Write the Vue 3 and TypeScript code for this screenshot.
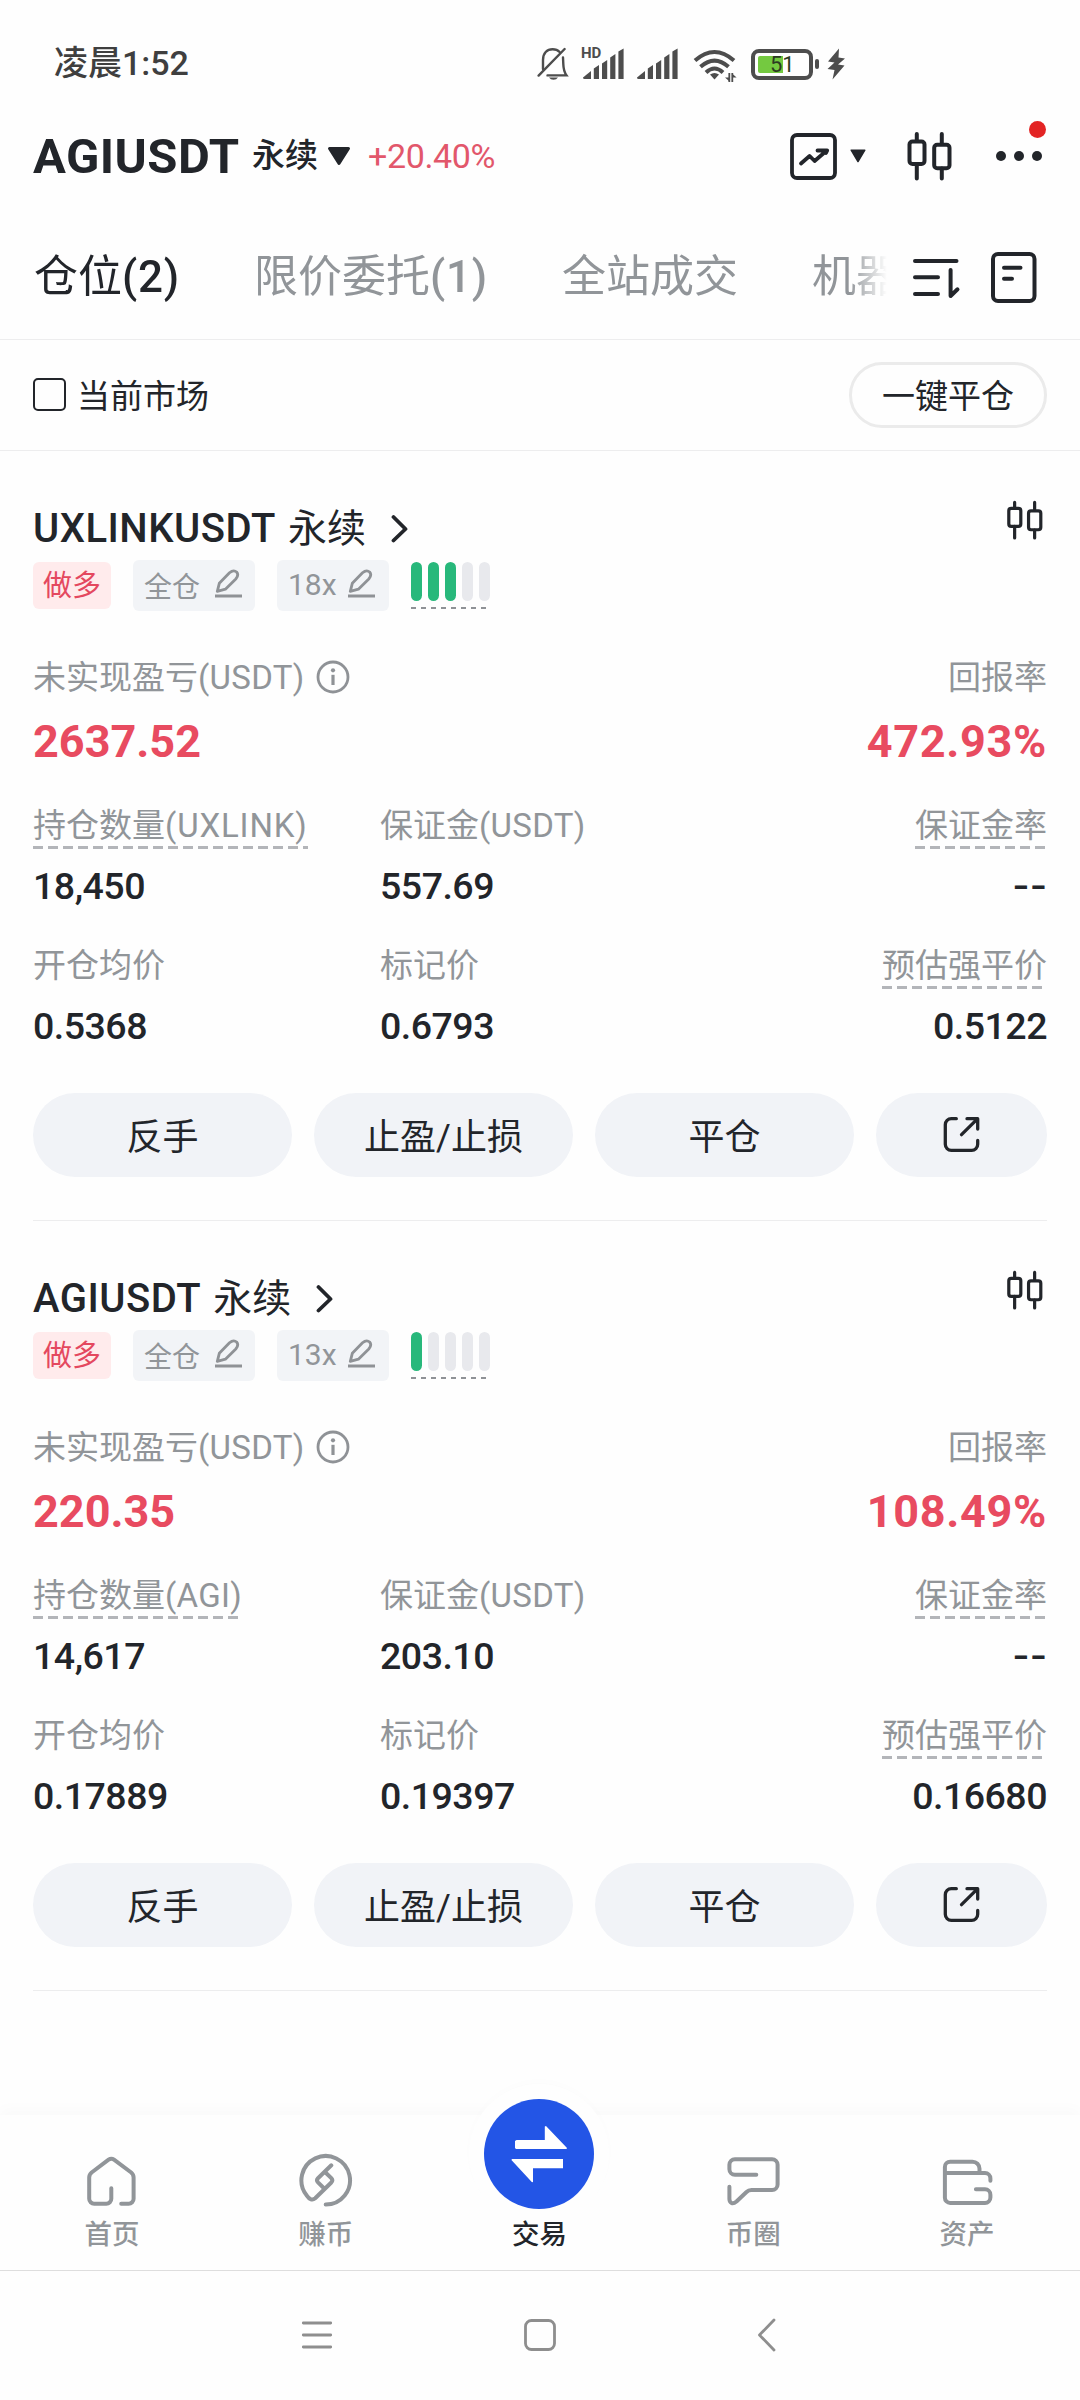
<script setup lang="ts">
interface Cell {
  label: string
  unit?: string
  value: string
  hint?: boolean
}

interface Position {
  symbol: string
  leverage: string
  risk: number
  pnl: string
  roi: string
  cells: Cell[]
}

const tabs = [
  { name: '仓位', count: '(2)', active: true },
  { name: '限价委托', count: '(1)', active: false },
  { name: '全站成交', count: '', active: false },
  { name: '机器人', count: '', active: false },
]

const positions: Position[] = [
  {
    symbol: 'UXLINKUSDT',
    leverage: '18x',
    risk: 3,
    pnl: '2637.52',
    roi: '472.93%',
    cells: [
      { label: '持仓数量', unit: '(UXLINK)', value: '18,450', hint: true },
      { label: '保证金', unit: '(USDT)', value: '557.69' },
      { label: '保证金率', value: '--', hint: true },
      { label: '开仓均价', value: '0.5368' },
      { label: '标记价', value: '0.6793' },
      { label: '预估强平价', value: '0.5122', hint: true },
    ],
  },
  {
    symbol: 'AGIUSDT',
    leverage: '13x',
    risk: 1,
    pnl: '220.35',
    roi: '108.49%',
    cells: [
      { label: '持仓数量', unit: '(AGI)', value: '14,617', hint: true },
      { label: '保证金', unit: '(USDT)', value: '203.10' },
      { label: '保证金率', value: '--', hint: true },
      { label: '开仓均价', value: '0.17889' },
      { label: '标记价', value: '0.19397' },
      { label: '预估强平价', value: '0.16680', hint: true },
    ],
  },
]

const actions = ['反手', '止盈/止损', '平仓']
</script>

<template>
  <div class="screen">
    <div class="status">
      <span class="clock">凌晨1:52</span>
      <svg class="s-bell" width="32" height="34" viewBox="0 0 32 34" fill="none" stroke="#4d4d4d" stroke-width="2.4" stroke-linecap="round">
        <path d="M6 22V13C6 6 10 2.3 15.6 2.3Q20 2.3 22.6 5M26 10.5L26.3 17Q26.5 24 29.5 28.4H10.5" />
        <path d="M1.6 28.6L27.6 2" />
        <path d="M12 30.5h9q-1.5 2.3-4.5 2.3t-4.500-2.300z" fill="#4d4d4d" stroke="none" />
      </svg>
      <div class="sim">
        <span class="hd">HD</span>
        <svg width="41" height="32" viewBox="0 0 41 32" fill="#4d4d4d">
          <path d="M0 29.500L8 23V31H1.500Q0 31 0 29.500z" />
          <path d="M10.800 20.500L16 17V31H10.800zM19 15.500L24.200 12V31H19zM27.200 9.500L32.400 6V31H27.200zM35.400 3.500L40.600 0.500V31H35.400z" />
        </svg>
      </div>
      <svg class="s-sim2" width="41" height="32" viewBox="0 0 41 32" fill="#4d4d4d">
        <path d="M0 29.500L8 23V31H1.500Q0 31 0 29.500z" />
        <path d="M10.800 20.500L16 17V31H10.800zM19 15.500L24.200 12V31H19zM27.200 9.500L32.400 6V31H27.200zM35.400 3.500L40.600 0.500V31H35.400z" />
      </svg>
      <svg class="s-wifi" width="44" height="34" viewBox="0 0 44 34" fill="none" stroke="#4d4d4d" stroke-width="4">
        <path d="M2 11.500Q21.500-5.500 41 11.500" />
        <path d="M7.500 17.800Q21.500 5.500 35.500 17.800" />
        <path d="M13 23.500Q21.500 15.500 30 23.500" />
        <path d="M17 25.500Q21.500 22.500 26 25.500L21.500 30.500z" fill="#4d4d4d" stroke="none" />
        <path d="M36.300 24V33M39.300 24V33" stroke-width="1.800" />
        <path d="M32 28.500h4v3.500zM43.600 28.500h-4v-3.500z" fill="#4d4d4d" stroke="none" />
      </svg>
      <div class="battery"><i></i><b>51</b></div>
      <div class="battery-cap"></div>
      <svg class="s-bolt" width="19" height="32" viewBox="0 0 19 32" fill="#4d4d4d">
        <path d="M12 0.500L1 13.500L7.500 14.500L0.500 21L7.500 22L5.500 31.500L17.500 17.500L11 16.500L18 10.500L11.500 9.500z" />
      </svg>
    </div>

    <header class="header">
      <h1>AGIUSDT</h1>
      <span class="perp">永续</span>
      <svg class="tri" width="24" height="20" viewBox="0 0 24 20"><path d="M2.500 2.500H21.500L12 17.500z" fill="#22252a" stroke="#22252a" stroke-width="3" stroke-linejoin="round" /></svg>
      <span class="change">+20.40%</span>
      <span class="grow"></span>
      <svg class="h-chart" width="49" height="49" viewBox="0 0 49 49" fill="none" stroke="#22252a" stroke-width="3.800" stroke-linecap="round" stroke-linejoin="round">
        <rect x="3" y="3" width="43" height="43" rx="5" />
        <path d="M12 31.500L20.600 24L25.600 29L37.500 18.800M28.500 18.500H38.200L37 21" />
      </svg>
      <svg class="h-tri" width="16" height="14" viewBox="0 0 16 14"><path d="M1.200 1.200H14.800L8 12.500z" fill="#22252a" stroke="#22252a" stroke-width="1.500" stroke-linejoin="round" /></svg>
      <svg class="h-candles" width="48" height="51" viewBox="0 0 48 51" fill="none" stroke="#22252a" stroke-width="4" stroke-linecap="round">
        <path d="M10.800 3V10M10.800 33V47.500M35.800 3V13M35.800 37.500V47.500" />
        <rect x="3.500" y="10.500" width="15" height="22.500" rx="3" />
        <rect x="28.200" y="13.700" width="15.300" height="23.500" rx="3" />
      </svg>
      <div class="more">
        <i></i><i></i><i></i>
        <em></em>
      </div>
    </header>

    <nav class="tabs">
      <div class="tab-list">
        <span v-for="t in tabs" :key="t.name" class="tab" :class="{ active: t.active }">{{ t.name }}<b>{{ t.count }}</b></span>
      </div>
      <svg class="t-sort" width="50" height="44" viewBox="0 0 50 44" fill="none" stroke="#22252a" stroke-width="4" stroke-linecap="round" stroke-linejoin="round">
        <path d="M4 5H45.500M4 21.300H27M4 38H27M39.600 14V40L46.500 33.300" />
      </svg>
      <svg class="t-note" width="50" height="55" viewBox="0 0 50 55" fill="none" stroke="#22252a" stroke-width="4" stroke-linecap="round">
        <rect x="4" y="4" width="41.500" height="47" rx="5" />
        <path d="M15 17.700H31.500M15 28.700H23" />
      </svg>
    </nav>

    <div class="filter">
      <span class="check"></span>
      <span class="check-label">当前市场</span>
      <button class="close-all">一键平仓</button>
    </div>

    <section v-for="p in positions" :key="p.symbol" class="card">
      <div class="title">
        <span class="symbol">{{ p.symbol }}</span>
        <span class="kind">永续</span>
        <svg class="chev" width="18" height="30" viewBox="0 0 18 30" fill="none" stroke="#22252a" stroke-width="3.800" stroke-linecap="round" stroke-linejoin="round"><path d="M2.500 3L14.500 15L2.500 26.500" /></svg>
        <svg class="c-candles" width="38.400" height="40.800" viewBox="0 0 48 51" fill="none" stroke="#22252a" stroke-width="4" stroke-linecap="round">
          <path d="M10.800 3V10M10.800 33V47.500M35.800 3V13M35.800 37.500V47.500" />
          <rect x="3.500" y="10.500" width="15" height="22.500" rx="3" />
          <rect x="28.200" y="13.700" width="15.300" height="23.500" rx="3" />
        </svg>
      </div>

      <div class="tags">
        <span class="side">做多</span>
        <span class="tag mode">全仓<svg class="pencil" width="30" height="31" viewBox="0 0 30 31" fill="none" stroke="#8f9296" stroke-width="2.800" stroke-linejoin="round"><path d="M4.300 23.300L6.300 15.300L16.500 4.800Q20.500 1.400 23.600 4Q26.200 7 22.800 11L12.400 21.200zM2 28H29" /></svg></span>
        <span class="tag lev">{{ p.leverage }}<svg class="pencil" width="30" height="31" viewBox="0 0 30 31" fill="none" stroke="#8f9296" stroke-width="2.800" stroke-linejoin="round"><path d="M4.300 23.300L6.300 15.300L16.500 4.800Q20.500 1.400 23.600 4Q26.200 7 22.800 11L12.400 21.200zM2 28H29" /></svg></span>
        <div class="risk">
          <div class="bars"><i v-for="n in 5" :key="n" :class="{ on: n <= p.risk }"></i></div>
        </div>
      </div>

      <div class="row pnl-label">
        <span class="label">未实现盈亏<span class="unit">(USDT)</span></span>
        <svg class="info" width="34" height="34" viewBox="0 0 34 34" fill="none" stroke="#8f9296" stroke-width="2.800"><circle cx="17" cy="17" r="15" /><path d="M17 14.800V25" stroke-width="3.200" /><circle cx="17" cy="10.300" r="2.100" fill="#8f9296" stroke="none" /></svg>
        <span class="label end">回报率</span>
      </div>
      <div class="row pnl">
        <span>{{ p.pnl }}</span>
        <span class="end roi">{{ p.roi }}</span>
      </div>

      <div class="cells">
        <div v-for="c in p.cells" :key="c.label" class="cell">
          <span class="label" :class="{ hint: c.hint }">{{ c.label }}<span v-if="c.unit" class="unit" :class="{ wide: c.unit.length > 6 }">{{ c.unit }}</span></span>
          <span class="value" :class="{ none: c.value === '--' }">{{ c.value }}</span>
        </div>
      </div>

      <div class="actions">
        <button v-for="a in actions" :key="a">{{ a }}</button>
        <button class="share">
          <svg width="41" height="41" viewBox="0 0 41 41" fill="none" stroke="#22252a" stroke-width="3.300" stroke-linecap="round" stroke-linejoin="round">
            <path d="M15.300 4.700H10.300a6 6 0 0 0-6 6V30.300a6 6 0 0 0 6 6H30.700a6 6 0 0 0 6-6V26.500" />
            <path d="M20.500 20.700L36.200 5.200M26 4.700H36.700V15" />
          </svg>
        </button>
      </div>
    </section>

    <div class="grow"></div>

    <footer class="nav">
      <div class="hump"></div>
      <div class="item">
        <svg width="51" height="54" viewBox="1 0 51 54"><path d="M26.300 33.300V43.700a5 5 0 0 1-5 5H9.200a5 5 0 0 1-5-5V22.500q0-3 2.400-5L23.600 4.700q2.700-2 5.400 0L46.200 17.500q2.400 2 2.400 5V43.700a5 5 0 0 1-5 5H36.200" /></svg>
        <span>首页</span>
      </div>
      <div class="item">
        <svg width="57" height="58" viewBox="0 0 57 58"><path d="M28.700 53.600A24.300 24.300 0 1 0 9.600 44.300Q14 50.800 18.200 47.300L34.300 31.500q2-2.200 0-4.400L28.500 21.500M34.300 14.300L21 27.200q-2 2.100 0 4.200L27.700 38" /></svg>
        <span>赚币</span>
      </div>
      <div class="item on">
        <div class="trade">
          <svg width="110" height="110" viewBox="0 0 110 110"><path d="M32.500 41H60.800V27.500L62 27L83 49L82.500 50H32L31 49V42zM28 60H79V69.300H49V83L48 83.200L27.400 61z" /></svg>
        </div>
        <span>交易</span>
      </div>
      <div class="item">
        <svg width="55" height="54" viewBox="0 0 55 54"><path d="M30.300 19.700H8.900a5.500 5.500 0 0 1-5.500-5.500V9.800a5.500 5.500 0 0 1 5.500-5.500H46.100a5.500 5.500 0 0 1 5.500 5.500V29.500a5.500 5.500 0 0 1-5.500 5.500H25.500q-3 0-5 2L10.500 46.500Q7.500 49 5.500 48T3.400 44V31.700" /></svg>
        <span>币圈</span>
      </div>
      <div class="item">
        <svg width="53" height="52" viewBox="0 0 53 52"><path d="M3.900 16H44a5.400 5.400 0 0 1 5.400 5.400V23.700M38.500 16V11.700a7 7 0 0 0-7-7H9.200A5.300 5.300 0 0 0 3.900 10V40.700A5.300 5.300 0 0 0 9.200 46H44a5.400 5.400 0 0 0 5.400-5.400V37.700a5.400 5.400 0 0 0-5.400-5.400H34.900" /></svg>
        <span>资产</span>
      </div>
    </footer>

    <div class="system">
      <svg width="34" height="34" viewBox="0 0 34 34"><path d="M3.300 5H30.700M3.300 17H30.700M3.300 29H30.700" /></svg>
      <svg width="34" height="34" viewBox="0 0 34 34"><rect x="2.500" y="2.500" width="29" height="29" rx="6" /></svg>
      <svg width="34" height="34" viewBox="0 0 34 34"><path d="M28 2L13.500 17L28 32" /></svg>
    </div>
  </div>
</template>

<style>
body {
  background: #fefefe;
}
</style>

<style scoped>
* {
  box-sizing: border-box;
}
.screen {
  display: flex;
  flex-direction: column;
  width: 1080px;
  height: 2400px;
  overflow: hidden;
  background: #fefefe;
  color: #22252a;
  font-family: Roboto, "Noto Sans CJK SC", sans-serif;
  white-space: nowrap;
}
svg {
  display: block;
  flex: none;
}
button {
  border: 0;
  padding: 0;
  font: inherit;
  color: inherit;
}
.grow {
  flex: 1;
}

/* status bar */
.status {
  display: flex;
  align-items: center;
  height: 128px;
  padding-left: 54px;
}
.clock {
  width: 483px;
  padding-bottom: 3px;
  font-size: 34px;
  line-height: 40px;
  font-weight: 500;
  color: #3f3f3f;
}
.sim {
  position: relative;
  margin-left: 14px;
}
.hd {
  position: absolute;
  left: -2px;
  top: -2px;
  font-size: 15px;
  line-height: 15px;
  font-weight: 700;
  color: #4d4d4d;
}
.s-sim2 {
  margin-left: 13px;
}
.s-wifi {
  margin: 4px 0 0 15px;
}
.battery {
  display: flex;
  align-items: center;
  position: relative;
  width: 62px;
  height: 31px;
  margin-left: 14px;
  padding-left: 3px;
  border: 4px solid #4d4d4d;
  border-radius: 8px;
}
.battery i {
  width: 25px;
  height: 17px;
  border-radius: 2px 0 0 2px;
  background: #74c940;
}
.battery b {
  position: absolute;
  left: 15px;
  top: 1px;
  font-size: 22px;
  line-height: 22px;
  font-weight: 400;
  color: #2b3a22;
}
.battery-cap {
  width: 4px;
  height: 10px;
  margin-left: 2px;
  border-radius: 2px;
  background: #4d4d4d;
}
.s-bolt {
  margin-left: 8px;
}

/* pair header */
.header {
  display: flex;
  align-items: center;
  height: 56px;
  padding: 0 33px;
}
h1 {
  width: 219px;
  margin: 2px 0 0;
  font-size: 49px;
  line-height: 56px;
  font-weight: 700;
  letter-spacing: 0.45px;
}
.perp {
  width: 75px;
  margin-top: -6px;
  font-size: 33px;
  font-weight: 500;
}
.change {
  margin-left: 17px;
  font-size: 34px;
  letter-spacing: -0.35px;
  color: #e2576b;
}
.h-tri {
  margin-left: 12px;
}
.h-candles {
  margin-left: 40px;
}
.more {
  position: relative;
  display: flex;
  gap: 8px;
  margin: 0 5px 0 42px;
}
.more i {
  width: 10px;
  height: 10px;
  border-radius: 50%;
  background: #22252a;
}
.more em {
  position: absolute;
  right: -4px;
  top: -30px;
  width: 17px;
  height: 17px;
  border-radius: 50%;
  background: #e32424;
}

/* tabs */
.tabs {
  display: flex;
  align-items: center;
  height: 156px;
  padding: 31px 41px 0 34px;
  border-bottom: 1px solid #ededee;
}
.tab-list {
  display: flex;
  gap: 74px;
  width: 856px;
  overflow: hidden;
  -webkit-mask-image: linear-gradient(90deg, #000 815px, transparent 853px);
  mask-image: linear-gradient(90deg, #000 815px, transparent 853px);
}
.tab {
  flex: none;
  font-size: 44px;
  line-height: 64px;
  color: #919599;
}
.tab b {
  font-weight: 500;
  letter-spacing: 0.8px;
}
.tab.active {
  color: #22252a;
}
.t-sort {
  margin: 2px 0 0 21px;
}
.t-note {
  margin-left: 28px;
}

/* filter row */
.filter {
  display: flex;
  align-items: center;
  height: 111px;
  padding: 0 33px;
  border-bottom: 1px solid #ededee;
}
.check {
  width: 33px;
  height: 33px;
  margin-top: -1px;
  border: 2px solid #22252a;
  border-radius: 5px;
}
.check-label {
  margin: -3px 0 0 11px;
  font-size: 33px;
}
.close-all {
  width: 198px;
  height: 66px;
  margin-left: auto;
  padding-bottom: 2px;
  border: 3px solid #ebebeb;
  border-radius: 33px;
  background: none;
  font-size: 33px;
}

/* position card */
.card {
  height: 770px;
  margin: 0 33px;
  padding-top: 54px;
  border-bottom: 1px solid #ededee;
}
.title {
  display: flex;
  align-items: center;
  height: 48px;
  font-size: 40px;
  line-height: 48px;
}
.symbol {
  font-weight: 500;
  letter-spacing: 0.5px;
}
.kind {
  margin-left: 12px;
  font-size: 39px;
}
.chev {
  margin-left: 25px;
}
.c-candles {
  align-self: flex-start;
  margin: -5px 3px 0 auto;
}
.tags {
  display: flex;
  align-items: center;
  height: 51px;
  margin-top: 7px;
  font-size: 28px;
}
.side {
  width: 78px;
  height: 47px;
  padding-top: 1px;
  border-radius: 6px;
  background: #ffebec;
  color: #e4485f;
  font-size: 29px;
  line-height: 47px;
  text-align: center;
}
.tag {
  display: flex;
  align-items: center;
  justify-content: space-between;
  height: 51px;
  margin-left: 22px;
  padding: 0 12px 2px 11px;
  border-radius: 6px;
  background: #f2f4f7;
  color: #919599;
}
.pencil {
  margin-top: -2px;
}
.mode {
  width: 122px;
}
.lev {
  width: 112px;
  padding-right: 13px;
  font-size: 30px;
}
.risk {
  align-self: flex-start;
  width: 79px;
  height: 48px;
  margin: 2px 0 0 22px;
  background: repeating-linear-gradient(90deg, #8f9296 0 5px, transparent 5px 10px) 0 45px / 77px 2px no-repeat;
}
.bars {
  display: flex;
  gap: 6px;
}
.bars i {
  width: 11px;
  height: 39px;
  border-radius: 6px;
  background: #e8e9ed;
}
.bars i.on {
  background: #28b87b;
}
.row {
  display: flex;
  align-items: center;
}
.end {
  margin-left: auto;
}
.label {
  font-size: 33px;
  line-height: 40px;
  color: #919599;
}
.unit {
  letter-spacing: 0.3px;
}
.unit.wide {
  letter-spacing: 0.85px;
}
.pnl-label {
  height: 40px;
  margin-top: 47px;
}
.info {
  margin: -2px 0 0 11px;
}
.pnl {
  height: 50px;
  margin-top: 19px;
  font-size: 45px;
  line-height: 50px;
  font-weight: 700;
  color: #e84b60;
}
.roi {
  letter-spacing: 0.7px;
}
.cells {
  display: grid;
  grid-template-columns: 347px 348px 1fr;
  row-gap: 38px;
  margin-top: 39px;
}
.cell {
  display: flex;
  flex-direction: column;
  align-items: flex-start;
  height: 102px;
}
.cell:nth-child(3n) {
  align-items: flex-end;
}
.cell .label {
  height: 43px;
}
.hint {
  background: repeating-linear-gradient(90deg, #b3b5b9 0 10px, transparent 10px 15px) 0 100% / 100% 3px no-repeat;
}
.value {
  margin-top: 15px;
  font-size: 37.5px;
  line-height: 44px;
  font-weight: 500;
  letter-spacing: -0.5px;
}
.none {
  font-family: Inter, sans-serif;
  letter-spacing: 0;
}
.actions {
  display: grid;
  grid-template-columns: 259px 259px 259px 171px;
  column-gap: 22px;
  margin-top: 45px;
}
.actions button {
  display: flex;
  align-items: center;
  justify-content: center;
  height: 84px;
  padding-bottom: 2px;
  border-radius: 42px;
  background: #f1f3f7;
  font-size: 36px;
}

/* bottom navigation */
.nav {
  position: relative;
  display: flex;
  height: 155px;
  padding: 0 6px 0 5px;
  background: #fefefe;
  box-shadow: 0 -6px 14px rgba(0, 0, 0, 0.018);
}
.hump {
  position: absolute;
  left: 469px;
  top: -31px;
  width: 140px;
  height: 140px;
  border-radius: 50%;
  background: #fefefe;
  box-shadow: 0 -3px 8px rgba(0, 0, 0, 0.012);
}
.item {
  position: relative;
  flex: 1;
  display: flex;
  flex-direction: column;
  align-items: center;
  justify-content: flex-end;
  padding-bottom: 15px;
  font-size: 27.5px;
  font-weight: 500;
  line-height: 40px;
  color: #919599;
}
.item > svg {
  fill: none;
  stroke: #919599;
  stroke-width: 4;
  stroke-linecap: round;
  stroke-linejoin: round;
  margin-bottom: 6px;
}
.item.on {
  color: #22252a;
}
.trade {
  width: 110px;
  height: 110px;
  margin-bottom: 6px;
  border-radius: 50%;
  background: #2355e6;
}
.trade svg {
  fill: #fff;
}

/* system keys */
.system {
  display: flex;
  align-items: flex-start;
  height: 130px;
  padding: 47px 0 0 300px;
  border-top: 1px solid #dedede;
}
.system svg {
  margin-right: 189px;
  fill: none;
  stroke: #8e8e8e;
  stroke-width: 2.8;
  stroke-linecap: round;
  stroke-linejoin: round;
}
</style>
